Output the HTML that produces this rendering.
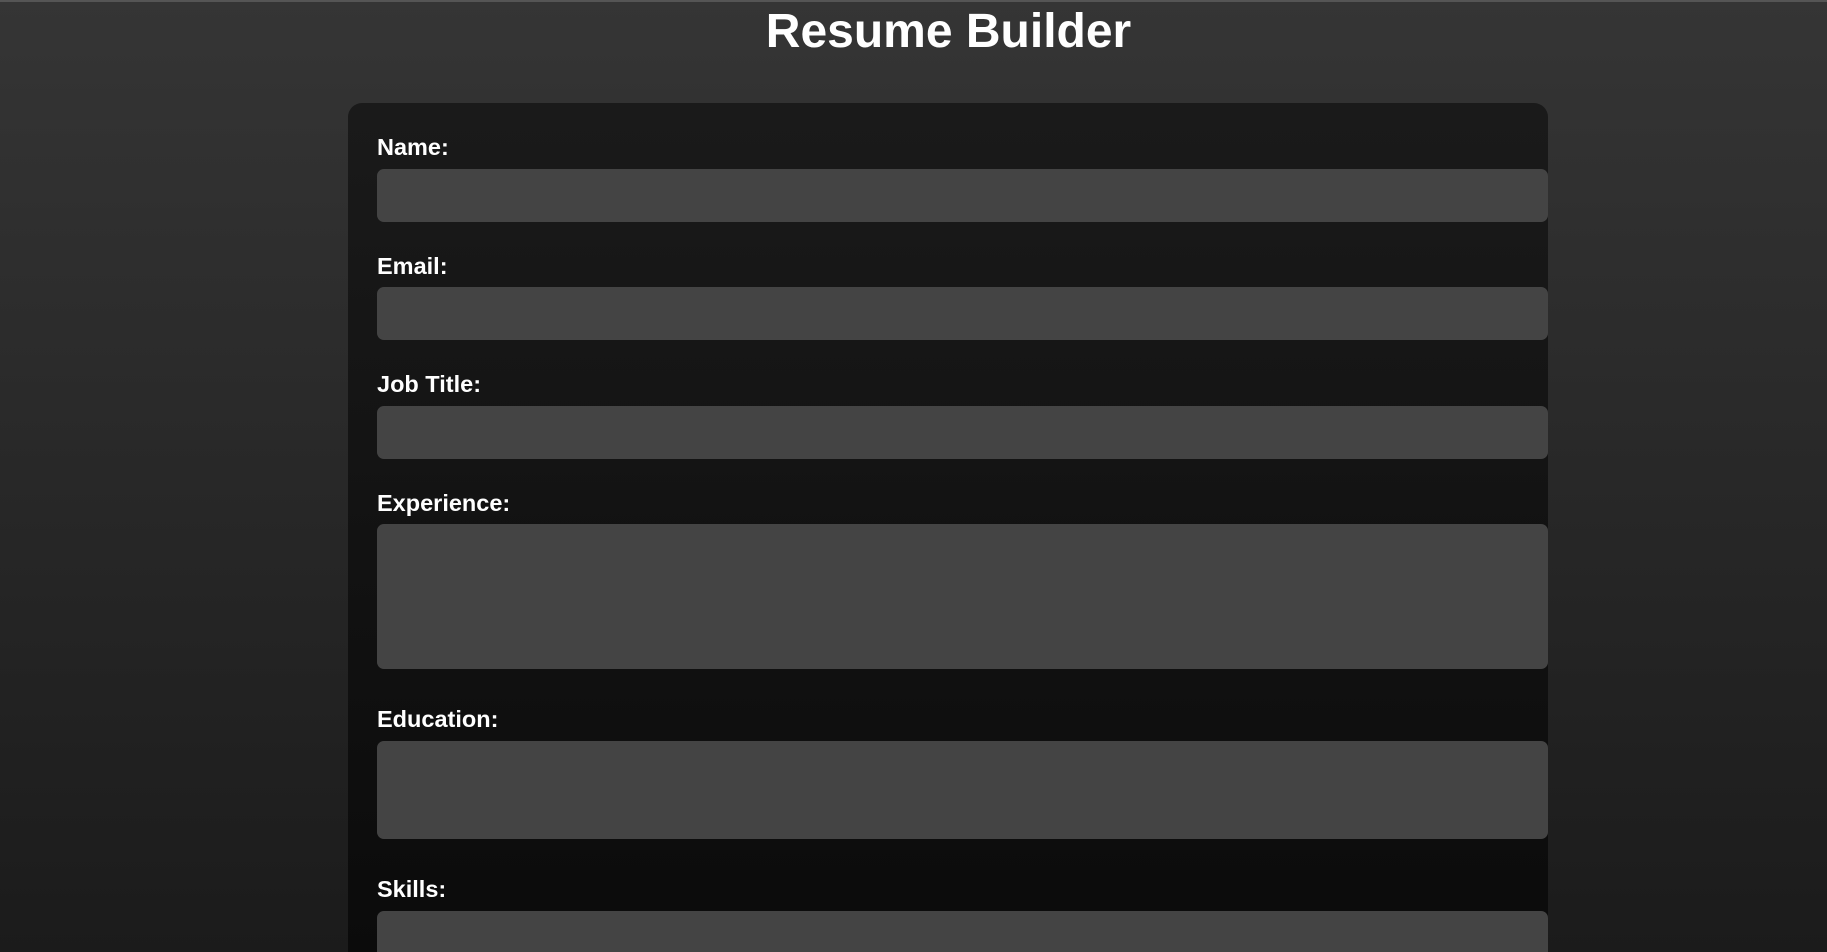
<!DOCTYPE html>
<html><head><meta charset="utf-8"><style>
html,body{margin:0;padding:0;width:1827px;height:952px;overflow:hidden;}
body{background:linear-gradient(#353535,#1b1b1b);font-family:"Liberation Sans",Arial,sans-serif;color:#fff;position:relative;}
.top{position:absolute;left:0;top:0;width:1827px;height:2px;background:#555;}
h1{position:absolute;left:70px;right:0;top:2px;margin:0;text-align:center;font-size:48px;line-height:60px;font-weight:bold;}
.card{position:absolute;left:348px;top:103px;width:1200px;height:849px;border-radius:14px 14px 0 0;background:linear-gradient(#1a1a1a,#0b0b0b);}
.l{position:absolute;left:377px;font-size:23.5px;font-weight:bold;line-height:28px;}
.i{position:absolute;left:377px;width:1171px;background:#444;border-radius:7px;}
</style></head><body>
<div class="top"></div>
<h1>Resume Builder</h1>
<div class="card"></div>
<div class="l" style="top:133px">Name:</div>
<div class="i" style="top:169px;height:53px"></div>
<div class="l" style="top:252px">Email:</div>
<div class="i" style="top:287px;height:53px"></div>
<div class="l" style="top:370px">Job Title:</div>
<div class="i" style="top:406px;height:53px"></div>
<div class="l" style="top:489px">Experience:</div>
<div class="i" style="top:524px;height:145px"></div>
<div class="l" style="top:705px">Education:</div>
<div class="i" style="top:741px;height:98px"></div>
<div class="l" style="top:875px">Skills:</div>
<div class="i" style="top:911px;height:41px;border-radius:7px 7px 0 0"></div>
</body></html>
